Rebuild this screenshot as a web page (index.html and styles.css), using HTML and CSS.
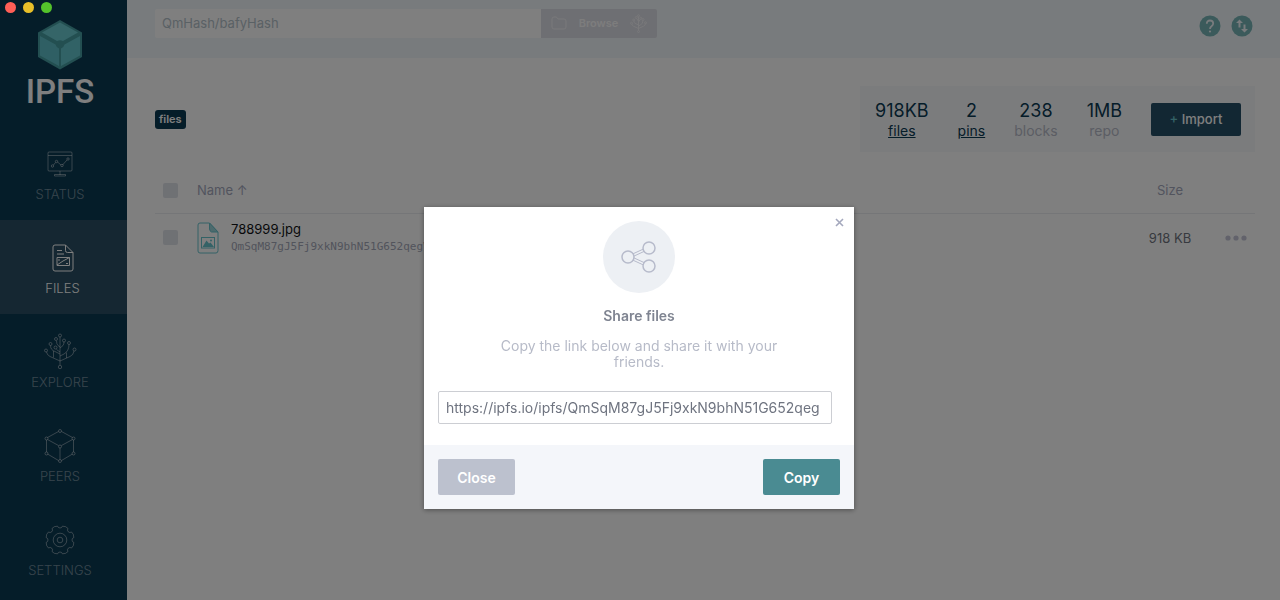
FILE: index.html
```html
<!DOCTYPE html>
<html lang="en">
<head>
  <meta charset="UTF-8">
  <meta name="viewport" content="width=device-width, initial-scale=1.0">
  <title>Files | IPFS</title>
  <link rel="stylesheet" href="styles.css">
</head>
<body>
  <div class="app">
    <aside class="sidebar">
      <a class="logo" href="#/">
        <svg width="46" height="52" viewBox="0 0 46 52">
          <path d="M23 1L45 13.500V38L23 50.500L1 38V13.500Z" fill="#469ea2"/>
          <path d="M23 3.500L41 13.500L26 22Q23 20.500 20 22L5 13.500Z" fill="#6acad1"/>
          <path d="M3 17L18.500 25.500Q19 28 22 29.500V47L3 36.500Z" fill="#5fbfc8"/>
          <path d="M43 17L27.500 25.500Q27 28 24 29.500V47L43 36.500Z" fill="#63c4cc"/>
        </svg>
        <span>IPFS</span>
      </a>
      <nav>
        <a class="nav-link" href="#/status">
          <svg width="26" height="32" viewBox="0 0 26 32">
            <rect x="1" y="2" width="24" height="19" rx="1"/>
            <path d="M1 5.500H25M13 21V25M7.500 24.500H18.500V26H7.500ZM6.500 15L8.500 12.500M10.500 12L14 15M15.500 15L20 10"/>
            <circle cx="5.500" cy="16" r="1.200"/>
            <circle cx="9.500" cy="11.500" r="1.200"/>
            <circle cx="15" cy="15.500" r="1.200"/>
            <circle cx="21" cy="9" r="1.200"/>
          </svg>
          <span>STATUS</span>
        </a>
        <a class="nav-link active" href="#/files">
          <svg width="22" height="32" viewBox="0 0 22 32">
            <path d="M3 1H13.500L21 8.500V25Q21 27 19 27H3Q1 27 1 25V3Q1 1 3 1ZM13.500 1V6.500Q13.500 8.500 15.500 8.500H21M5 6.500H10M5 10H12"/>
            <path d="M5 13.500H17.500V21.500H5ZM5 21L11 17L17.500 13.500M6 16H8M14 19.500H16"/>
          </svg>
          <span>FILES</span>
        </a>
        <a class="nav-link" href="#/explore">
          <svg width="34" height="38" viewBox="0 0 34 38">
            <path d="M17 5V33M17 29L7 24.500Q4 23 3.500 20M17 29L27 24.500Q30.500 23 31 19M17 22L12 19.500Q7.500 18 7.500 13.500M10.500 25.500V19M17 24L21 22Q26 19 26 12.500M23.500 26V20.500M17 15L15 13.500Q13.500 12 13.500 9M17 16L20 13.500Q21 12 21 10M17 20L13.500 17.500"/>
            <circle cx="17" cy="3.500" r="1.500"/>
            <circle cx="13" cy="7" r="1.500"/>
            <circle cx="21" cy="8.500" r="1.500"/>
            <circle cx="7.500" cy="12" r="1.500"/>
            <circle cx="26" cy="11" r="1.500"/>
            <circle cx="12.500" cy="15.500" r="1.500"/>
            <circle cx="3" cy="18.500" r="1.500"/>
            <circle cx="31.500" cy="17.500" r="1.500"/>
            <circle cx="17" cy="35" r="1.700"/>
          </svg>
          <span>EXPLORE</span>
        </a>
        <a class="nav-link" href="#/peers">
          <svg width="32" height="35" viewBox="0 0 32 35">
            <path d="M17.500 2.500L28.500 8.500M29.500 11V23M28.500 25L17.500 31.500M14.500 31.500L3.500 25M2.500 23V11M3.500 8.500L14.500 2.500M3.500 10.500L14.500 16.500M28.500 10.500L17.500 16.500M16 19V30.500"/>
            <circle cx="16" cy="2" r="1.500"/>
            <circle cx="29.500" cy="9.500" r="1.500"/>
            <circle cx="29.500" cy="24.500" r="1.500"/>
            <circle cx="16" cy="32" r="1.500"/>
            <circle cx="2.500" cy="24.500" r="1.500"/>
            <circle cx="2.500" cy="9.500" r="1.500"/>
            <circle cx="16" cy="17.500" r="1.500"/>
          </svg>
          <span>PEERS</span>
        </a>
        <a class="nav-link" href="#/settings">
          <svg width="30" height="33" viewBox="-15 -15 30 33">
            <path d="M-2.400 -13.800A2.500 2.500 0 0 0 2.400 -13.800Q6 -14 8 -11.500A2.500 2.500 0 0 0 11.500 -8Q14 -6 13.800 -2.400A2.500 2.500 0 0 0 13.800 2.400Q14 6 11.500 8A2.500 2.500 0 0 0 8 11.500Q6 14 2.400 13.800A2.500 2.500 0 0 0 -2.400 13.800Q-6 14 -8 11.500A2.500 2.500 0 0 0 -11.500 8Q-14 6 -13.800 2.400A2.500 2.500 0 0 0 -13.800 -2.400Q-14 -6 -11.500 -8A2.500 2.500 0 0 0 -8 -11.500Q-6 -14 -2.400 -13.800Z"/>
            <circle r="6.800"/>
            <circle r="2.800"/>
          </svg>
          <span>SETTINGS</span>
        </a>
      </nav>
    </aside>

    <div class="page">
      <header class="topbar">
        <form class="search">
          <input type="text" aria-label="IPFS path" placeholder="QmHash/bafyHash">
          <button type="button">
            <svg width="16" height="14" viewBox="0 0 16 14">
              <path d="M1 3Q1 1 3 1H5Q6 1 7 3H13Q15 3 15 5V11Q15 13 13 13H3Q1 13 1 11Z"/>
            </svg>
            <span>Browse</span>
            <svg width="17" height="19" viewBox="0 0 34 38" stroke-width="2">
              <path d="M17 5V33M17 29L7 24.500Q4 23 3.500 20M17 29L27 24.500Q30.500 23 31 19M17 22L12 19.500Q7.500 18 7.500 13.500M17 24L21 22Q26 19 26 12.500M17 15L13.500 9M17 16L21 10"/>
              <circle cx="17" cy="3.500" r="2"/>
              <circle cx="12.500" cy="7" r="2"/>
              <circle cx="21.500" cy="8.500" r="2"/>
              <circle cx="7.500" cy="12" r="2"/>
              <circle cx="26" cy="11" r="2"/>
              <circle cx="3" cy="18.500" r="2"/>
              <circle cx="31" cy="17.500" r="2"/>
              <circle cx="17" cy="35" r="2"/>
            </svg>
          </button>
        </form>
        <div class="top-actions">
          <button type="button" aria-label="Help">
            <svg width="22" height="22" viewBox="0 0 22 22">
              <circle cx="11" cy="11" r="10.500" fill="#76b5b7"/>
              <path d="M7.800 8.800Q7.800 5.500 11 5.500Q14.200 5.500 14.200 8.500Q14.200 10 12.500 11.200Q11 12.200 11 14" fill="none" stroke="#f0f6fa" stroke-width="1.800"/>
              <circle cx="11" cy="16.500" r="1.100" fill="#f0f6fa"/>
            </svg>
          </button>
          <button type="button" aria-label="Transfers">
            <svg width="22" height="22" viewBox="0 0 22 22">
              <circle cx="11" cy="11" r="10.500" fill="#76b5b7"/>
              <path d="M8.500 4.500L5 8H7.500V12.500H9.500V8H12ZM13.500 17.500L17 14H14.500V9.500H12.500V14H10Z" fill="#f0f6fa"/>
            </svg>
          </button>
        </div>
      </header>

      <main>
        <div class="summary">
          <a class="crumb" href="#/files">files</a>
          <div class="stats">
            <div class="stat"><b>918KB</b><a href="#/files">files</a></div>
            <div class="stat"><b>2</b><a href="#/pins">pins</a></div>
            <div class="stat"><b>238</b><span>blocks</span></div>
            <div class="stat"><b>1MB</b><span>repo</span></div>
            <button class="import" type="button"><span class="plus">+</span> Import</button>
          </div>
        </div>

        <table class="files">
          <thead>
            <tr>
              <th class="col-check"><input type="checkbox" aria-label="Select all"></th>
              <th class="col-name">Name ↑</th>
              <th class="col-size">Size</th>
              <th class="col-more"></th>
            </tr>
          </thead>
          <tbody>
            <tr>
              <td class="col-check"><input type="checkbox" aria-label="Select 788999.jpg"></td>
              <td class="col-name">
                <div class="file">
                  <svg width="22" height="32" viewBox="0 0 22 32">
                    <path d="M3 1H12.500L21 10V28.500Q21 31 19 31H3Q1 31 1 29V3Q1 1 3 1Z" fill="none" stroke="#69c4cd"/>
                    <path d="M12.500 1L21 10H14.500Q12.500 9 12.500 7Z" fill="#9ad4db" stroke="#69c4cd"/>
                    <rect x="4.500" y="15.500" width="13" height="10.500" fill="none" stroke="#69c4cd"/>
                    <path d="M5.500 25L9.500 18.500L12 21.500L13.500 20.500L17 25Z" fill="#69c4cd"/>
                    <circle cx="14" cy="18.500" r="1" fill="#69c4cd"/>
                  </svg>
                  <div class="file-text">
                    <span>788999.jpg</span>
                    <code>QmSqM87gJ5Fj9xkN9bhN51G652qegV</code>
                  </div>
                </div>
              </td>
              <td class="col-size">918 KB</td>
              <td class="col-more">
                <button type="button" aria-label="More">
                  <svg width="24" height="6" viewBox="0 0 24 6" fill="#c4c5d6">
                    <circle cx="4" cy="3" r="2.600"/>
                    <circle cx="12" cy="3" r="2.600"/>
                    <circle cx="20" cy="3" r="2.600"/>
                  </svg>
                </button>
              </td>
            </tr>
          </tbody>
        </table>
      </main>
    </div>
  </div>

  <div class="overlay">
    <div class="modal" role="dialog" aria-labelledby="share-title">
      <div class="modal-body">
        <button class="dismiss" type="button" aria-label="Dismiss">
          <svg width="9" height="9" viewBox="0 0 9 9">
            <path d="M1 1L8 8M8 1L1 8" stroke="#a4a8bd" stroke-width="1.600"/>
          </svg>
        </button>
        <div class="share-icon">
          <svg width="36" height="34" viewBox="0 0 36 34" fill="none" stroke="#b7bbcb">
            <path d="M12 13.800L22.500 9M12.500 16.300L24 11M12 20.200L22.500 25M12.500 17.700L24 23"/>
            <g stroke-width="1.500" fill="#edf0f4">
              <circle cx="7" cy="17" r="6"/>
              <circle cx="28" cy="8" r="6"/>
              <circle cx="28" cy="26" r="6"/>
            </g>
          </svg>
        </div>
        <h2 id="share-title">Share files</h2>
        <p>Copy the link below and share it with your friends.</p>
        <input class="share-link" type="text" aria-label="Share link" readonly value="https://ipfs.io/ipfs/QmSqM87gJ5Fj9xkN9bhN51G652qeg">
      </div>
      <div class="modal-actions">
        <button class="close" type="button">Close</button>
        <button class="copy" type="button">Copy</button>
      </div>
    </div>
  </div>

  <div class="window-controls">
    <span class="red"></span>
    <span class="yellow"></span>
    <span class="green"></span>
  </div>
</body>
</html>
```
FILE: styles.css
```css
* {
  box-sizing: border-box;
}

body {
  margin: 0;
  font-family: Inter, "Liberation Sans", sans-serif;
  font-size: 14px;
  color: #34373f;
  background-color: #fff;
}

button,
input {
  font-family: inherit;
}

button {
  padding: 0;
  border: none;
  background: none;
  cursor: pointer;
}

svg {
  display: block;
}

.app {
  display: flex;
  min-height: 100vh;
}

/* sidebar */
.sidebar {
  flex: none;
  width: 127px;
  background-color: #0b3a53;
}

.logo {
  display: flex;
  flex-direction: column;
  align-items: center;
  height: 126px;
  padding: 19px 7px 0 0;
  color: #fff;
  font-family: Roboto, "Liberation Sans", sans-serif;
  font-size: 33px;
  font-weight: 500;
  line-height: 42px;
  text-decoration: none;
}

.nav-link {
  display: flex;
  flex-direction: column;
  align-items: center;
  justify-content: flex-end;
  gap: 3px;
  height: 94px;
  padding: 0 7px 17px 0;
  color: rgba(255, 255, 255, 0.42);
  font-size: 13px;
  font-weight: 300;
  line-height: 18px;
  text-decoration: none;
}

.nav-link svg {
  fill: none;
  stroke: currentColor;
}

.nav-link.active {
  padding-right: 2px;
  color: #fff;
  background-color: #2b4f64;
}

/* top bar */
.page {
  flex: 1;
  min-width: 0;
}

.topbar {
  display: flex;
  align-items: center;
  justify-content: space-between;
  height: 58px;
  padding: 0 27px 12px 28px;
  background-color: #f0f6fa;
}

.search {
  display: flex;
  width: 502px;
  height: 29px;
}

.search input {
  flex: 1;
  min-width: 0;
  padding: 0 7px;
  border: none;
  border-radius: 2px 0 0 2px;
  background-color: #fff;
  font-size: 13px;
}

.search input::placeholder {
  color: #b4c2ca;
}

.search button {
  display: flex;
  align-items: center;
  justify-content: space-between;
  width: 116px;
  padding: 0 10px;
  border-radius: 0 2px 2px 0;
  background-color: #dddee6;
  color: #fafafb;
  font-size: 11px;
  font-weight: 600;
}

.search button svg {
  fill: none;
  stroke: #f2f2f6;
}

.top-actions {
  display: flex;
  gap: 10px;
  padding-top: 5px;
}

/* files page */
main {
  padding: 28px 25px 0 28px;
}

.summary {
  display: flex;
  align-items: center;
  justify-content: space-between;
}

.crumb {
  padding: 0 4px;
  border-radius: 3px;
  background-color: #0b3a53;
  color: #fff;
  font-size: 11px;
  font-weight: 600;
  line-height: 19px;
  text-decoration: none;
}

.stats {
  display: flex;
  align-items: center;
  gap: 29px;
  height: 66px;
  padding: 0 14px 0 15px;
  background-color: #f7f8fb;
}

.stat {
  display: flex;
  flex-direction: column;
  align-items: center;
  color: #b7bbc8;
  line-height: 17px;
}

.stat b {
  color: #0b3a53;
  font-size: 18px;
  font-weight: 400;
  line-height: 22px;
}

.stat a {
  color: #0b3a53;
}

.import {
  width: 90px;
  height: 33px;
  border-radius: 2px;
  background-color: #244e66;
  color: #fff;
  font-size: 13px;
  font-weight: 500;
}

.plus {
  color: #69c4cd;
}

.files {
  width: 100%;
  margin-top: 14px;
  border-collapse: collapse;
  table-layout: fixed;
}

.files th,
.files td {
  padding: 0;
  text-align: left;
  font-weight: 400;
}

.files th {
  height: 47px;
  padding-top: 2px;
  color: #a4a8bd;
  font-size: 13px;
}

.files td {
  height: 49px;
  border-top: 1px solid #eaecf0;
}

.files .col-check {
  width: 42px;
  padding-left: 8px;
}

.files .col-size {
  width: 68px;
  text-align: center;
  font-size: 13px;
}

.files td.col-size {
  color: #6f7480;
}

.files .col-more {
  width: 51px;
  padding-left: 20px;
}

.files button,
.files input {
  display: block;
}

.files input {
  width: 15px;
  height: 15px;
  margin: 0;
  appearance: none;
  border-radius: 2px;
  background-color: #dfe2e9;
}

.file {
  display: flex;
  align-items: center;
  gap: 12px;
}

.file-text {
  display: flex;
  flex-direction: column;
  font-size: 13px;
  line-height: 17px;
}

.file-text span {
  color: #101216;
}

.file-text code {
  color: #a4a8b8;
  font-family: "DejaVu Sans Mono", monospace;
  font-size: 11px;
}

/* share dialog */
.overlay {
  position: fixed;
  inset: 0;
  display: flex;
  align-items: flex-start;
  justify-content: center;
  padding: 207px 2px 0 0;
  background-color: rgba(0, 0, 0, 0.5);
}

.modal {
  width: 430px;
  background-color: #fff;
  box-shadow: 0 1px 5px rgba(0, 0, 0, 0.4);
}

.modal-body {
  position: relative;
  display: flex;
  flex-direction: column;
  align-items: center;
  padding: 14px 14px 21px;
}

.dismiss {
  position: absolute;
  top: 11px;
  right: 10px;
}

.share-icon {
  display: flex;
  align-items: center;
  justify-content: center;
  width: 72px;
  height: 72px;
  border-radius: 50%;
  background-color: #edf0f4;
}

.modal h2 {
  margin: 14px 0;
  color: #7f8491;
  font-size: 14px;
  font-weight: 600;
  line-height: 17px;
}

.modal p {
  width: 300px;
  margin: 0 0 21px;
  color: #b7bbc8;
  line-height: 16px;
  text-align: center;
}

.share-link {
  align-self: stretch;
  height: 33px;
  margin-right: 8px;
  padding: 0 7px;
  border: 1px solid #ccced3;
  border-radius: 2px;
  color: #6f7480;
  font-size: 14px;
}

.modal-actions {
  display: flex;
  justify-content: space-between;
  padding: 14px;
  background-color: #f4f6fa;
}

.modal-actions button {
  width: 77px;
  height: 36px;
  border-radius: 2px;
  color: #fff;
  font-size: 14px;
  font-weight: 600;
}

.modal-actions .close {
  background-color: #bcc1ce;
}

.modal-actions .copy {
  background-color: #4a8b92;
}

/* macOS window buttons */
.window-controls {
  position: fixed;
  top: 2px;
  left: 5px;
  display: flex;
  gap: 7px;
}

.window-controls span {
  width: 11px;
  height: 11px;
  border-radius: 50%;
}

.window-controls .red {
  background-color: #ff5f57;
}

.window-controls .yellow {
  background-color: #e8bf29;
}

.window-controls .green {
  background-color: #54c22b;
}
```
